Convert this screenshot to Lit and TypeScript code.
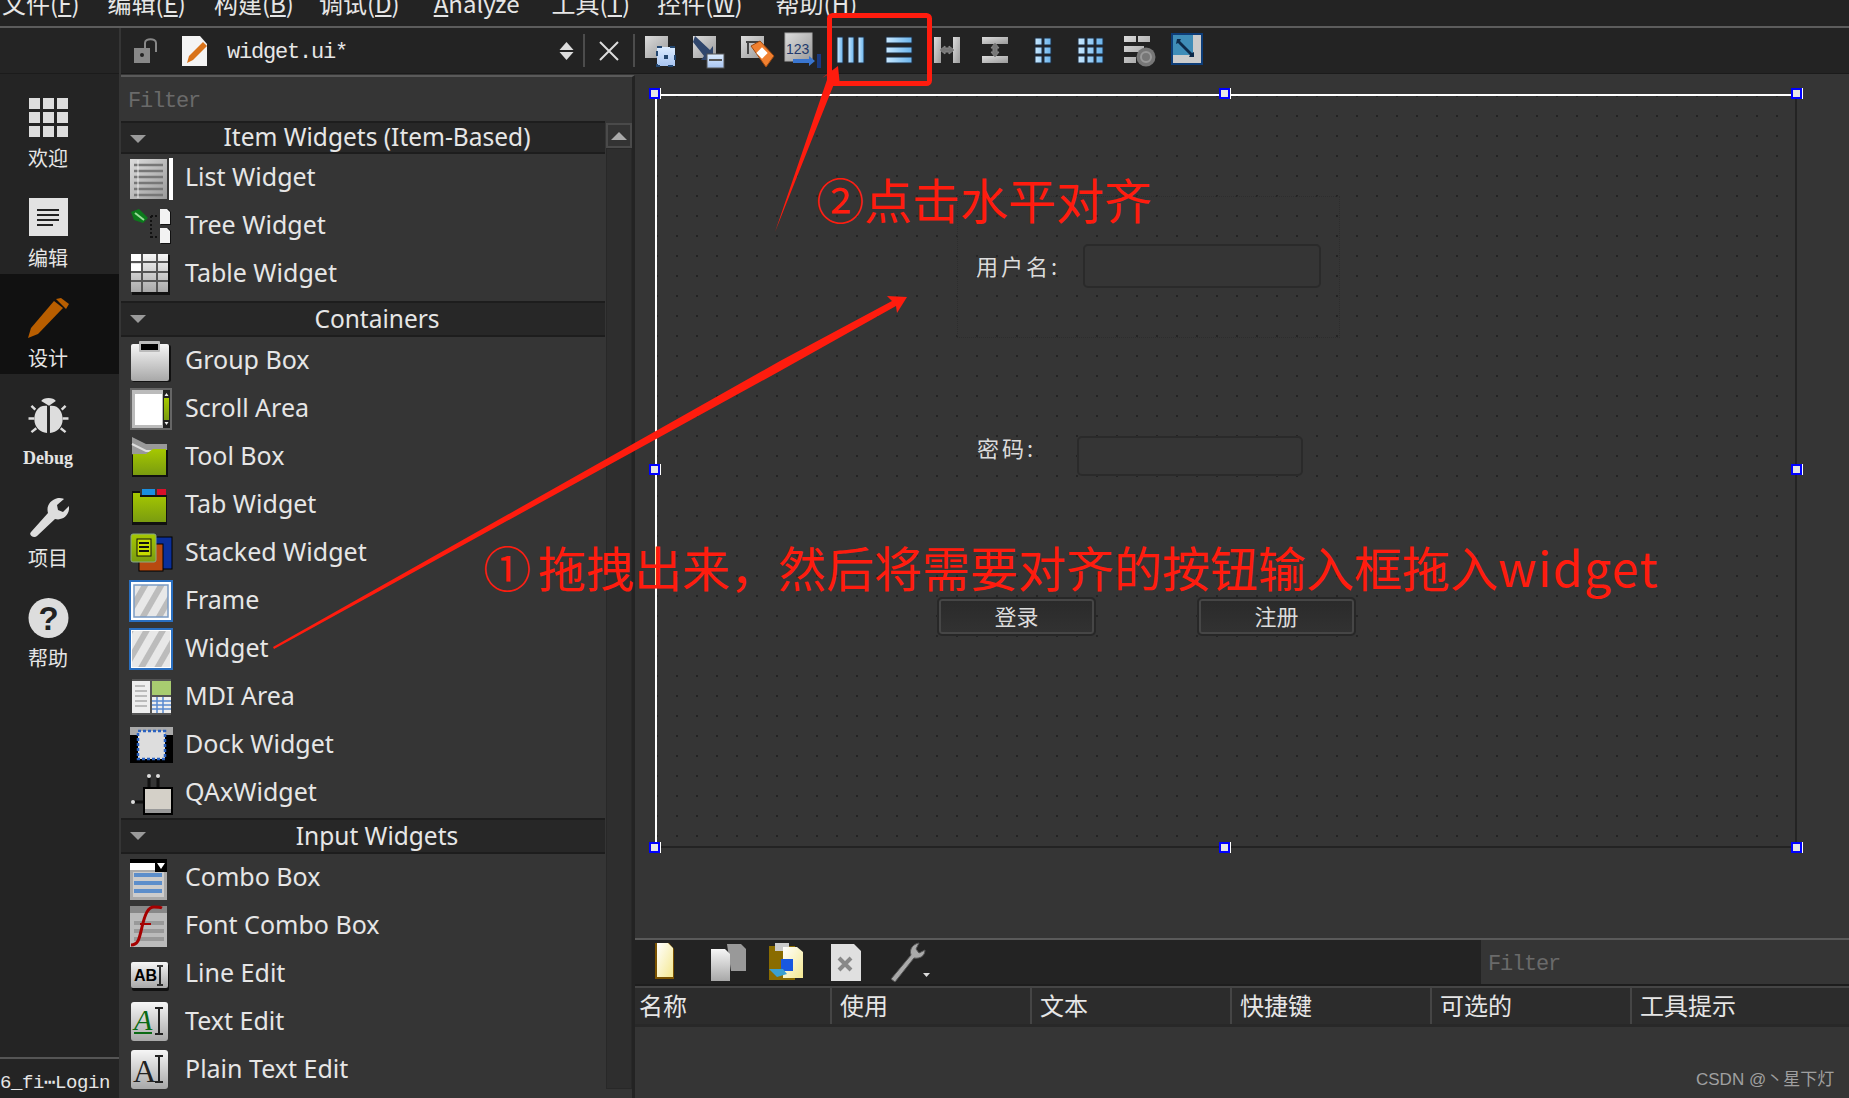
import { LitElement, css, html, svg } from 'lit';
import { customElement } from 'lit/decorators.js';

const box = (w: number, h: number, body: unknown) =>
  html`<svg width=${w} height=${h} viewBox="0 0 ${w} ${h}">${body}</svg>`;

// widget box icons, 44x44, centred in their row
const panelIcons: Record<string, unknown> = {
  list: svg`<rect x="1" y="3" width="37" height="40" fill="url(#gg)"/>
    <path d="M5 9h29M5 15h29M5 21h29M5 27h29M5 33h29M5 39h29" stroke="#777" stroke-width="2.4"/>
    <path d="M9 4v38" stroke="#eee" stroke-width="1"/><rect x="40" y="2" width="4" height="42" fill="#fff"/>`,
  tree: svg`<path d="M2 8l8-3 9 9-5 5-9-3z" fill="#0c7a1c"/><path d="M6 9l9 7" stroke="#9d9" stroke-width="2"/>
    <path d="M22 12v22M22 12h8M22 33h8" stroke="#111" stroke-width="2" stroke-dasharray="2 2"/>
    <path d="M32 5h7l3 3v13H32zM32 24h7l3 3v13H32z" fill="#111"/><path d="M31 5h7l3 3v12H31zM31 24h7l3 3v12H31z" fill="#f2f2f2"/>`,
  table: svg`<rect x="3" y="3" width="38" height="40" fill="#111"/><rect x="2" y="2" width="37" height="38" fill="url(#gw)"/>
    <path d="M2 10h37M2 20h37M2 29h37M13 2v38M28 2v38" stroke="#555" stroke-width="2"/>
    <rect x="2" y="2" width="10" height="7" fill="#fff"/><rect x="2" y="12" width="10" height="7" fill="#fff"/>`,
  group: svg`<rect x="3" y="6" width="39" height="37" rx="2" fill="#111"/><rect x="2" y="5" width="38" height="37" rx="2" fill="url(#gw)"/>
    <rect x="10" y="2" width="21" height="11" rx="1" fill="#bbb"/><rect x="12" y="5" width="17" height="6" fill="#000"/>`,
  scroll: svg`<rect x="1" y="1" width="42" height="42" fill="#666"/><rect x="3" y="3" width="38" height="38" fill="#bbb"/>
    <rect x="6" y="7" width="27" height="31" fill="#fff"/><rect x="34" y="3" width="7" height="38" fill="#222"/>
    <rect x="35" y="11" width="5" height="22" fill="url(#go)"/><path d="M35.500 9l2-3 2 3zM35.500 35l2 3 2-3z" fill="#eee"/>`,
  tool: svg`<path d="M3 2l14 7h21v10H3z" fill="#999"/><path d="M3 9l14 7h21" stroke="#ddd" stroke-width="2" fill="none"/>
    <path d="M3 20h14l7-5h15v27H3z" fill="#111"/><path d="M4 19h13l7-5h13v26H4z" fill="url(#go)"/>`,
  tab: svg`<path d="M3 8h8v4h27v30H3z" fill="#111"/><path d="M4 10h7v4h26v25H4z" fill="url(#go)"/>
    <rect x="13" y="6" width="13" height="6" fill="#1a8fe0"/><rect x="28" y="6" width="9" height="6" fill="#d8102a"/>`,
  stacked: svg`<rect x="22" y="6" width="21" height="32" fill="#0b2f9a" stroke="#000"/>
    <rect x="10" y="13" width="24" height="27" fill="#b84a10" stroke="#000"/>
    <rect x="2" y="3" width="25" height="28" rx="2" fill="url(#go)" stroke="#8a8" />
    <rect x="8" y="8" width="14" height="17" fill="#c6dc00" stroke="#111"/>
    <path d="M10 12h10M10 16h10M10 20h10" stroke="#111" stroke-width="2"/>`,
  frame: svg`<rect x="1" y="2" width="42" height="40" fill="#fff" stroke="#2a6fc0" stroke-width="2"/>
    <rect x="5" y="6" width="34" height="32" fill="url(#stripe)" stroke="#7a9bc4" stroke-width="1.500"/>`,
  widget: svg`<rect x="1" y="2" width="42" height="40" fill="#fff" stroke="#2a6fc0" stroke-width="2"/>
    <rect x="3" y="4" width="38" height="36" fill="url(#stripe)"/>`,
  mdi: svg`<rect x="3" y="4" width="39" height="36" fill="#555"/>
    <rect x="3" y="6" width="18" height="32" fill="#eee"/><path d="M6 11h10M6 16h12M6 21h12M6 26h12M6 31h12" stroke="#aaa" stroke-width="1.500"/>
    <rect x="23" y="6" width="19" height="14" fill="#a8cc70"/><rect x="23" y="22" width="19" height="16" fill="#eee"/>
    <path d="M23 26h19M23 30h19M23 34h19M28 22v16M34 22v16" stroke="#5a8ad0" stroke-width="1.500"/>`,
  dock: svg`<rect x="1" y="4" width="43" height="36" fill="#000"/><rect x="1" y="4" width="43" height="8" fill="#aaa"/>
    <rect x="9" y="8" width="27" height="28" fill="#ddd" stroke="#2a62c0" stroke-width="2.500" stroke-dasharray="3 2"/>`,
  qax: svg`<path d="M20 16V6M29 16V6M14 31H5" stroke="#111" stroke-width="3"/>
    <circle cx="20" cy="5" r="2" fill="#ddd"/><circle cx="29" cy="5" r="2" fill="#ddd"/><circle cx="4" cy="31" r="2" fill="#ddd"/>
    <rect x="14" y="16" width="30" height="28" fill="#000"/><rect x="16" y="18" width="26" height="24" fill="#d4d0c8"/>
    <rect x="16" y="38" width="26" height="4" fill="#999"/>`,
  combo: svg`<rect x="1" y="3" width="37" height="41" fill="#aaa"/><rect x="1" y="3" width="37" height="11" fill="#fff"/><rect x="1" y="3" width="37" height="4" fill="#000"/>
    <rect x="26" y="4" width="12" height="12" fill="#000"/><path d="M28 7h8l-4 6z" fill="#fff"/>
    <rect x="4" y="16" width="31" height="25" fill="#ccc"/><path d="M5 19h28M5 27h28M5 35h28" stroke="#5c8ecb" stroke-width="4"/>`,
  fontcombo: svg`<rect x="1" y="2" width="37" height="41" fill="#888"/><rect x="1" y="9" width="37" height="34" fill="#bbb"/>
    <path d="M5 19h30M5 27h30M5 35h30" stroke="#999" stroke-width="4"/>
    <path d="M2 41c7 0 8-5 11-18s6-20 12-20c3 0 6 0 8 1" stroke="#a50000" stroke-width="3" fill="none"/><path d="M11 20h11" stroke="#a50000" stroke-width="2"/>`,
  lineedit: svg`<rect x="3" y="12" width="37" height="27" rx="2" fill="#111"/><rect x="2" y="10" width="37" height="26" rx="2" fill="url(#gw)"/>
    <text x="5" y="29" font-family="Liberation Sans" font-size="16" font-weight="700" fill="#000">AB</text>
    <path d="M31 15v17M28 14h6M28 33h6" stroke="#000" stroke-width="1.600"/>`,
  textedit: svg`<rect x="2" y="2" width="37" height="39" rx="3" fill="url(#gw)"/>
    <text x="5" y="30" font-family="Liberation Serif" font-size="30" font-style="italic" fill="#0a6a14">A</text>
    <path d="M5 33h18" stroke="#0a6a14" stroke-width="2"/><path d="M30 8v26M26 8h8M26 34h8" stroke="#222" stroke-width="2"/>`,
  plain: svg`<rect x="2" y="2" width="37" height="39" rx="3" fill="url(#gw)"/>
    <text x="4" y="34" font-family="Liberation Serif" font-size="32" fill="#222">A</text>
    <path d="M30 8v26M26 8h8M26 34h8" stroke="#222" stroke-width="2"/>`,
};

// top toolbar, 40x40
const toolIcons = [
  svg`<rect x="6" y="6" width="23" height="22" fill="url(#gg)"/><rect x="18" y="17" width="18" height="19" fill="url(#gb)" stroke="#23466f" stroke-width="2" stroke-dasharray="5 8"/><rect x="25" y="25" width="4" height="4" fill="#23466f"/>`,
  svg`<rect x="6" y="6" width="23" height="22" fill="url(#gg)"/><path d="M8 6l15 14 3-4v14H14l3-4L6 12z" fill="#30466c"/><rect x="20" y="24" width="17" height="14" fill="url(#gb)" stroke="#555"/><rect x="22" y="29" width="13" height="2" fill="#555"/>`,
  svg`<rect x="6" y="6" width="23" height="22" fill="url(#gg)"/><path d="M11 12h14M13 12v12" stroke="#444" stroke-width="2"/><path d="M16 16l9-5 14 15-8 11z" fill="#f08030" stroke="#a04a10"/><rect x="23" y="19" width="8" height="8" transform="rotate(45 27 23)" fill="#fff"/>`,
  svg`<rect x="2" y="3" width="27" height="28" fill="url(#gg)" stroke="#aaa"/><text x="3" y="24" font-family="Liberation Sans" font-size="14" fill="#223a6c">123</text><path d="M10 29h16v-3l6 5-6 5v-3H10z" fill="#3a76d0"/><rect x="34" y="24" width="4" height="14" fill="#1a3a80"/>`,
  svg`<g stroke="#1d2c40"><rect x="6" y="7" width="6" height="26" fill="url(#gc)"/><rect x="17" y="7" width="6" height="26" fill="url(#gc)"/><rect x="27" y="7" width="6" height="26" fill="url(#gc)"/></g>`,
  svg`<g stroke="#1d2c40"><rect x="7" y="7" width="26" height="6" fill="url(#gc)"/><rect x="7" y="17" width="26" height="6" fill="url(#gc)"/><rect x="7" y="27" width="26" height="6" fill="url(#gc)"/></g>`,
  svg`<rect x="7" y="7" width="7" height="26" fill="url(#gg)"/><rect x="26" y="7" width="7" height="26" fill="url(#gg)"/><path d="M13 20l5-4v2h4v-2l5 4-5 4v-2h-4v2z" fill="#777" stroke="#888"/>`,
  svg`<rect x="7" y="7" width="26" height="7" fill="url(#gg)"/><rect x="7" y="26" width="26" height="7" fill="url(#gg)"/><path d="M20 13l4 5h-2v4h2l-4 5-4-5h2v-4h-2z" fill="#777" stroke="#888"/>`,
  svg`<path d="M12 8h7v7h-7zM21 8h7v7h-7zM12 17h7v7h-7zM21 17h7v7h-7zM12 26h7v7h-7zM21 26h7v7h-7z" fill="url(#gc)" stroke="#1d2c40"/>`,
  svg`<path d="M7 8h7v7H7zM16 8h7v7h-7zM25 8h7v7h-7zM7 17h7v7H7zM16 17h7v7h-7zM25 17h7v7h-7zM7 26h7v7H7zM16 26h7v7h-7zM25 26h7v7h-7z" fill="url(#gc)" stroke="#1d2c40"/>`,
  svg`<path d="M5 6h12v6H5zM19 6h12v6H19zM5 16h20v6H5zM5 27h12v6H5z" fill="url(#gg)"/><circle cx="27" cy="27" r="9.500" fill="#777"/><circle cx="27" cy="27" r="5" fill="none" stroke="#999" stroke-width="2"/>`,
  svg`<rect x="5" y="4" width="30" height="30" fill="#ccc" stroke="#0d3d78" stroke-width="2"/><rect x="6" y="5" width="20" height="20" fill="#3f8db8"/><path d="M10 9l4 0-1 2 12 12 2-1v5h-5l1-2L11 13l-2 1z" fill="#0d2a4a"/>`,
];

const bottomIcons = [
  svg`<path d="M8 2h14l5 6v30H8z" fill="#7a5200"/><path d="M10 2h11l5 5v29H10z" fill="url(#gy)"/>`,
  svg`<path d="M20 3h14l5 5v22H24z" fill="#999"/><path d="M4 8h14l5 5v27H4z" fill="url(#gw)"/>`,
  svg`<rect x="2" y="5" width="26" height="34" fill="#8a6c00"/><rect x="8" y="2" width="14" height="8" fill="#ccc"/><path d="M16 6h14l6 5v26H16z" fill="url(#gy)"/><rect x="14" y="18" width="12" height="12" fill="#1858e0"/><path d="M2 28h14l4 5-10 3z" fill="#3aa0d0"/>`,
  svg`<path d="M4 3h23l7 7v30H4z" fill="#e0e0e0"/><path d="M12 17l12 12M24 17L12 29" stroke="#888" stroke-width="4"/>`,
  svg`<path d="M4 38l20-24c-2-6 2-11 8-12l-3 6 3 4 6-3c0 6-5 9-11 8L8 41z" fill="#aaa" stroke="#555"/><path d="M36 32h7l-3.500 4z" fill="#ddd"/>`,
];

const sections = [
  {
    title: 'Item Widgets (Item-Based)',
    items: [['List Widget', 'list'], ['Tree Widget', 'tree'], ['Table Widget', 'table']],
  },
  {
    title: 'Containers',
    items: [
      ['Group Box', 'group'], ['Scroll Area', 'scroll'], ['Tool Box', 'tool'], ['Tab Widget', 'tab'],
      ['Stacked Widget', 'stacked'], ['Frame', 'frame'], ['Widget', 'widget'], ['MDI Area', 'mdi'],
      ['Dock Widget', 'dock'], ['QAxWidget', 'qax'],
    ],
  },
  {
    title: 'Input Widgets',
    items: [
      ['Combo Box', 'combo'], ['Font Combo Box', 'fontcombo'], ['Line Edit', 'lineedit'],
      ['Text Edit', 'textedit'], ['Plain Text Edit', 'plain'],
    ],
  },
];

const nav = [
  {
    label: '欢迎',
    icon: svg`<path d="M1 0h11v11H1zM15 0h11v11H15zM29 0h11v11H29zM1 14h11v11H1zM15 14h11v11H15zM29 14h11v11H29zM1 28h11v11H1zM15 28h11v11H15zM29 28h11v11H29z" fill="#ddd"/>`,
  },
  {
    label: '编辑',
    icon: svg`<rect x="1" y="0" width="39" height="38" fill="#e2e2e2"/><path d="M9 12h22M9 17h22M9 22h22M9 27h16" stroke="#222" stroke-width="2"/>`,
  },
  {
    label: '设计',
    active: true,
    icon: svg`<path d="M0 40l3-10L26 3l9 7L10 36z" fill="#b85e00"/><path d="M28 1l5-1 8 6-3 5z" fill="#b85e00"/>`,
  },
  {
    label: 'Debug',
    latin: true,
    icon: svg`<path d="M13 3c2-4 13-4 15 0l-7 5z" fill="#ddd"/><path d="M19 8C10 7 6 14 6 22c0 8 6 13 13 14zM22 8c9-1 13 6 13 14 0 8-6 13-13 14z" fill="#ddd"/><path d="M7 12L3 8M34 12l4-4M6 21H0M35 21h6M8 31l-5 4M33 31l5 4" stroke="#ddd" stroke-width="2.500"/>`,
  },
  {
    label: '项目',
    icon: svg`<path d="M3 34L20 15c-2-7 2-13 10-15 2 0 5 0 6 1l-7 6 1 5 5 2 6-6c1 9-6 15-14 13L9 38c-3 3-9-1-6-4z" fill="#ddd"/>`,
  },
  {
    label: '帮助',
    icon: svg`<ellipse cx="20.500" cy="20" rx="20" ry="20" fill="#ddd"/><text x="20.500" y="32" text-anchor="middle" font-family="Liberation Sans" font-weight="700" font-size="33" fill="#222">?</text>`,
  },
];

const menus: [string, string, string, number][] = [
  ['文件(', 'F', ')', 2], ['编辑(', 'E', ')', 28], ['构建(', 'B', ')', 28], ['调试(', 'D', ')', 25],
  ['', 'A', 'nalyze', 34], ['工具(', 'T', ')', 32], ['控件(', 'W', ')', 27], ['帮助(', 'H', ')', 33],
];

const columns = ['名称', '使用', '文本', '快捷键', '可选的', '工具提示'];

// designer handles round the selected form, form-relative
const handles = [
  [0, 0], [570, 0], [1142, 0], [0, 376], [1142, 376], [0, 754], [570, 754], [1142, 754],
];

@customElement('app-root')
export class AppRoot extends LitElement {
  static styles = css`
    :host {
      display: block;
      position: relative;
      width: 1849px;
      height: 1098px;
      overflow: hidden;
      background: #353535;
      font-family: 'Noto Sans', 'Noto Sans CJK SC', sans-serif;
      color: #e6e6e6;
    }
    svg {
      display: block;
    }
    .defs {
      position: absolute;
      width: 0;
      height: 0;
    }

    .menubar {
      height: 26px;
      background: #232323;
      display: flex;
      overflow: hidden;
      border-bottom: 2px solid #5c5c5c;
      font-family: 'Noto Sans CJK SC', sans-serif;
      font-size: 24px;
      line-height: 24px;
    }
    .menu {
      margin-top: -9px;
      white-space: nowrap;
    }

    .body {
      display: flex;
      height: 1070px;
    }

    .sidebar {
      width: 119px;
      margin-right: 2px;
      background: #242424;
      display: flex;
      flex-direction: column;
    }
    .side-head {
      height: 45px;
      border-bottom: 1px solid #1b1b1b;
    }
    .nav {
      flex: 1;
    }
    .nav-item {
      height: 100px;
      box-sizing: border-box;
      padding: 24px 23px 0 0;
      display: flex;
      flex-direction: column;
      align-items: center;
    }
    .nav-item.active {
      background: #111;
    }
    .nav-label {
      margin-top: 5px;
      font-size: 20px;
      line-height: 30px;
      font-family: 'Noto Sans CJK SC', sans-serif;
    }
    .nav-label.latin {
      font-family: 'Liberation Serif', serif;
      font-weight: 700;
      font-size: 18px;
      line-height: 32px;
      color: #e4e4e4;
    }
    .side-foot {
      height: 39px;
      border-top: 2px solid #555;
      font: 19px/48px 'Liberation Mono', monospace;
      letter-spacing: -0.4px;
      white-space: nowrap;
      overflow: hidden;
    }

    .main {
      flex: 1;
      display: flex;
      flex-direction: column;
      min-width: 0;
    }
    .toolbar {
      height: 45px;
      flex: none;
      background: #232323;
      border-bottom: 1px solid #1b1b1b;
      display: flex;
      align-items: center;
    }
    .lock {
      margin-left: 12px;
    }
    .doc {
      margin-left: 22px;
    }
    .docname {
      margin-left: 18px;
      width: 356px;
      box-sizing: border-box;
      padding-right: 9px;
      display: flex;
      align-items: center;
      justify-content: space-between;
      font: 22px 'Liberation Mono', monospace;
      letter-spacing: -1.2px;
      white-space: nowrap;
    }
    .docname span {
      margin-top: 3px;
    }
    .sep {
      width: 2px;
      height: 33px;
      background: #4c4c4c;
    }
    .close {
      margin: 0 14px;
    }
    .tool-btn {
      width: 48px;
      display: flex;
      justify-content: center;
      margin-top: -2px;
    }
    .tools {
      display: flex;
    }

    .split {
      flex: 1;
      display: flex;
      min-height: 0;
    }
    .widgetbox {
      width: 511px;
      flex: none;
      display: flex;
      flex-direction: column;
      border-top: 2px solid #5a5a5a;
      border-right: 3px solid #232323;
      margin-top: 1px;
    }
    .filter {
      height: 44px;
      flex: none;
      box-sizing: border-box;
      background: #353535;
      padding-left: 7px;
      font: 22px/49px 'Liberation Mono', monospace;
      letter-spacing: -1.2px;
      color: #6a6a6a;
    }
    .box-body {
      flex: 1;
      display: flex;
      min-height: 0;
    }
    .list {
      width: 484px;
      flex: none;
      overflow: hidden;
      background: #353535;
    }
    .cat {
      height: 32px;
      box-sizing: content-box;
      background: #272727;
      border-top: 2px solid #1d1d1d;
      border-bottom: 2px solid #1d1d1d;
      display: flex;
      align-items: center;
      justify-content: center;
      position: relative;
      padding-left: 28px;
      font-size: 24.500px;
      line-height: 28px;
    }
    .section:first-child .cat {
      height: 27px;
      padding-bottom: 2px;
    }
    .section:nth-child(2) .cat {
      margin-top: 3px;
    }
    .section:nth-child(3) .cat {
      margin-top: 1px;
    }
    .tri {
      position: absolute;
      left: 9px;
      top: 12px;
      width: 0;
      height: 0;
      border-left: 8px solid transparent;
      border-right: 8px solid transparent;
      border-top: 8px solid #9a9a9a;
    }
    .item {
      height: 48px;
      display: flex;
      align-items: center;
      padding-left: 8px;
      font-size: 25px;
    }
    .item span {
      margin: -4px 0 0 12px;
    }
    .scroll {
      width: 26px;
      flex: none;
      margin-left: 1px;
      display: flex;
      flex-direction: column;
    }
    .scroll-up {
      height: 25px;
      box-sizing: border-box;
      margin-top: 2px;
      border: 2px solid #4a4a4a;
      background: #333;
      display: flex;
      align-items: center;
      justify-content: center;
    }
    .scroll-up i {
      border-left: 8px solid transparent;
      border-right: 8px solid transparent;
      border-bottom: 8px solid #aaa;
    }
    .scroll-track {
      height: 941px;
      box-sizing: border-box;
      background: #2e2e2e;
      border: 1px solid #282828;
    }

    .right {
      flex: 1;
      display: flex;
      flex-direction: column;
      min-width: 0;
    }
    .canvas {
      height: 864px;
      flex: none;
      box-sizing: border-box;
      padding: 20px 0 0 20px;
      background: #353535;
    }
    .form {
      position: relative;
      width: 1142px;
      height: 754px;
      box-sizing: border-box;
      border-style: solid;
      border-width: 2px;
      border-color: #fff #232323 #232323 #fff;
      background-image: radial-gradient(circle at 1px 1px, #232323 1px, transparent 1.01px);
      background-size: 20px 20px;
      background-position: -1px -1px;
    }
    .handle {
      position: absolute;
      width: 11px;
      height: 11px;
      box-sizing: border-box;
      margin: -6px 0 0 -6px;
      background: #e6e6e6;
      border: 2px solid #00f;
      box-shadow: 1px 0 0 #fff;
    }
    .guide {
      position: absolute;
      left: 300px;
      top: 100px;
      width: 381px;
      height: 140px;
      border: 1px dotted #2d2d2d;
    }
    .w {
      position: absolute;
      font-family: 'Noto Sans CJK SC', sans-serif;
      font-size: 22px;
      line-height: 24px;
      color: #dcdcdc;
      letter-spacing: 3px;
      white-space: nowrap;
    }
    .user-l {
      left: 319px;
      top: 157px;
    }
    .pass-l {
      left: 320px;
      top: 339px;
    }
    .field {
      position: absolute;
      box-sizing: border-box;
      height: 44px;
      background: #353535;
      border: 2px solid #2a2a2a;
      border-radius: 5px;
    }
    .user-f {
      left: 426px;
      top: 148px;
      width: 238px;
    }
    .pass-f {
      left: 420px;
      top: 340px;
      width: 226px;
      height: 40px;
    }
    .btn {
      position: absolute;
      box-sizing: border-box;
      width: 159px;
      height: 39px;
      top: 501px;
      border: 2px solid #272727;
      border-radius: 5px;
      box-shadow: inset 0 0 0 2px #464646;
      background: linear-gradient(#2a2a2a, #323232);
      font-family: 'Noto Sans CJK SC', sans-serif;
      font-size: 22px;
      line-height: 33px;
      text-align: center;
      color: #dcdcdc;
    }
    .login {
      left: 280px;
    }
    .reg {
      left: 540px;
    }

    .bottom {
      flex: 1;
      display: flex;
      flex-direction: column;
      border-top: 2px solid #5a5a5a;
    }
    .bottom-bar {
      height: 44px;
      flex: none;
      display: flex;
      background: #232323;
      align-items: center;
      border-bottom: 2px solid #1d1d1d;
    }
    .bottom-tools {
      width: 846px;
      box-sizing: border-box;
      flex: none;
      display: flex;
      padding-left: 4px;
    }
    .bottom-btn {
      width: 60px;
      display: flex;
      justify-content: center;
    }
    .bottom-filter {
      flex: 1;
      height: 44px;
      background: #353535;
      padding-left: 7px;
      font: 22px/50px 'Liberation Mono', monospace;
      letter-spacing: -1.2px;
      color: #6a6a6a;
    }
    .columns {
      display: grid;
      grid-template-columns: 197px repeat(4, 200px) 1fr;
      height: 36px;
      flex: none;
      background: #2c2c2c;
      border-top: 2px solid #454545;
      border-bottom: 3px solid #282828;
    }
    .col {
      border-right: 2px solid #454545;
      padding-left: 4px;
      font-family: 'Noto Sans CJK SC', sans-serif;
      font-size: 24px;
      line-height: 34px;
      white-space: nowrap;
      overflow: hidden;
    }
    .col:not(:first-child) {
      padding-left: 8px;
    }
    .col:last-child {
      border-right: none;
    }

    /* red hand-drawn notes that lie over the screenshot */
    .marks {
      position: absolute;
      left: 0;
      top: 0;
      pointer-events: none;
    }
    .note {
      position: absolute;
      font-family: 'Noto Sans CJK SC', sans-serif;
      font-size: 48px;
      line-height: 60px;
      color: #ff1c0e;
      white-space: nowrap;
    }
    .note-two {
      left: 816px;
      top: 168px;
    }
    .note-one {
      left: 483px;
      top: 536px;
    }
    .note-one b {
      font-weight: 400;
      display: inline-block;
      width: 55px;
    }
    .note-one em {
      font-style: normal;
      letter-spacing: 1.500px;
    }
    .mark {
      position: absolute;
      left: 1696px;
      top: 1069px;
      font-family: 'Liberation Sans', 'Noto Sans CJK SC', sans-serif;
      font-size: 17px;
      line-height: 22px;
      color: #a0a0a0;
      white-space: nowrap;
    }
  `;

  render() {
    return html`
      <svg class="defs" aria-hidden="true">
        <defs>
          <linearGradient id="gw" x2="0" y2="1"><stop offset="0" stop-color="#f6f6f6" /><stop offset="1" stop-color="#a8a8a8" /></linearGradient>
          <linearGradient id="gg" x2="1" y2="1"><stop offset="0" stop-color="#dcdcdc" /><stop offset="1" stop-color="#9a9a9a" /></linearGradient>
          <linearGradient id="go" x2="0" y2="1"><stop offset="0" stop-color="#a6c800" /><stop offset="1" stop-color="#7a9c10" /></linearGradient>
          <linearGradient id="gb" x2="0" y2="1"><stop offset="0" stop-color="#dcecff" /><stop offset="1" stop-color="#a8c4f0" /></linearGradient>
          <linearGradient id="gc"><stop offset="0" stop-color="#c8e8ff" /><stop offset="1" stop-color="#6ab4ec" /></linearGradient>
          <linearGradient id="gy" x2="1" y2="1"><stop offset="0" stop-color="#fff" /><stop offset="1" stop-color="#f4e890" /></linearGradient>
          <pattern id="stripe" width="14" height="14" patternUnits="userSpaceOnUse" patternTransform="rotate(30)">
            <rect width="14" height="14" fill="#e8e8e8" />
            <rect width="6" height="14" fill="#bcbcbc" />
          </pattern>
        </defs>
      </svg>
      <div class="menubar">${menus.map(
        ([a, key, b, gap]) => html`<div class="menu" style="margin-left:${gap}px">${a}<u>${key}</u>${b}</div>`
      )}</div>
      <div class="body">
        ${this.renderSidebar()}
        <div class="main">
          ${this.renderToolbar()}
          <div class="split">
            ${this.renderWidgetBox()}
            <div class="right">
              <div class="canvas">${this.renderForm()}</div>
              ${this.renderActions()}
            </div>
          </div>
        </div>
      </div>
      ${this.renderNotes()}
    `;
  }

  renderSidebar() {
    return html`<div class="sidebar">
      <div class="side-head"></div>
      <div class="nav">
        ${nav.map(
          (n) => html`<div class="nav-item ${n.active ? 'active' : ''}">
            ${box(41, 40, n.icon)}
            <div class="nav-label ${n.latin ? 'latin' : ''}">${n.label}</div>
          </div>`
        )}
      </div>
      <div class="side-foot">6_fi⋯Login</div>
    </div>`;
  }

  renderToolbar() {
    return html`<div class="toolbar">
      <div class="lock">${box(26, 26, svg`<rect x="1" y="10" width="16" height="15" fill="#888"/><circle cx="9" cy="17" r="2" fill="#222"/><path d="M12 10V5c0-5 11-5 11 0v9" fill="none" stroke="#888" stroke-width="2"/>`)}</div>
      <div class="doc">${box(28, 32, svg`<path d="M1 1h18l7 8v22H1z" fill="#f4f4f4"/><path d="M6 28l2-7L22 7l4 4-14 14z" fill="#d9731a"/>`)}</div>
      <div class="docname">
        <span>widget.ui*</span>
        ${box(15, 20, svg`<path d="M7.500 1l7 8H.5zM7.500 19l7-8H.5z" fill="#ddd"/>`)}
      </div>
      <div class="sep"></div>
      <div class="close">${box(20, 20, svg`<path d="M1 1l18 18M19 1L1 19" stroke="#ddd" stroke-width="2"/>`)}</div>
      <div class="sep"></div>
      <div class="tools">
        ${toolIcons.map((icon) => html`<div class="tool-btn">${box(40, 40, icon)}</div>`)}
      </div>
    </div>`;
  }

  renderWidgetBox() {
    return html`<div class="widgetbox">
      <div class="filter">Filter</div>
      <div class="box-body">
        <div class="list">
          ${sections.map(
            (s) => html`<div class="section">
              <div class="cat"><i class="tri"></i>${s.title}</div>
              ${s.items.map(
                ([name, icon]) => html`<div class="item">${box(44, 44, panelIcons[icon])}<span>${name}</span></div>`
              )}
            </div>`
          )}
        </div>
        <div class="scroll">
          <div class="scroll-up"><i></i></div>
          <div class="scroll-track"></div>
        </div>
      </div>
    </div>`;
  }

  renderForm() {
    return html`<div class="form">
      <div class="guide"></div>
      <div class="w user-l">用户名:</div>
      <div class="field user-f"></div>
      <div class="w pass-l">密码:</div>
      <div class="field pass-f"></div>
      <div class="btn login">登录</div>
      <div class="btn reg">注册</div>
      ${handles.map(
        ([x, y]) => html`<div class="handle" style="left:${x - 2}px;top:${y - 2}px"></div>`
      )}
    </div>`;
  }

  renderActions() {
    return html`<div class="bottom">
      <div class="bottom-bar">
        <div class="bottom-tools">
          ${bottomIcons.map((icon) => html`<div class="bottom-btn">${box(44, 42, icon)}</div>`)}
        </div>
        <div class="bottom-filter">Filter</div>
      </div>
      <div class="columns">
        ${columns.map((c) => html`<div class="col">${c}</div>`)}
      </div>
    </div>`;
  }

  renderNotes() {
    return html`
      <svg class="marks" width="1849" height="1098">
        <rect x="829.500" y="15.500" width="100" height="68" rx="3" fill="none" stroke="#ff1c0e" stroke-width="5" />
        <path d="M775 232L829 74 822 78 838 66 840 86 834 84Z" fill="#ff1c0e" />
        <path d="M273 647L780 361 892 301 887 296 907 297 897 313 896 306 780 371 274 649Z" fill="#ff1c0e" />
      </svg>
      <div class="note note-two">②点击水平对齐</div>
      <div class="note note-one"><b>①</b>拖拽出来，然后将需要对齐的按钮输入框拖入<em>widget</em></div>
      <div class="mark">CSDN @丶星下灯</div>
    `;
  }
}
